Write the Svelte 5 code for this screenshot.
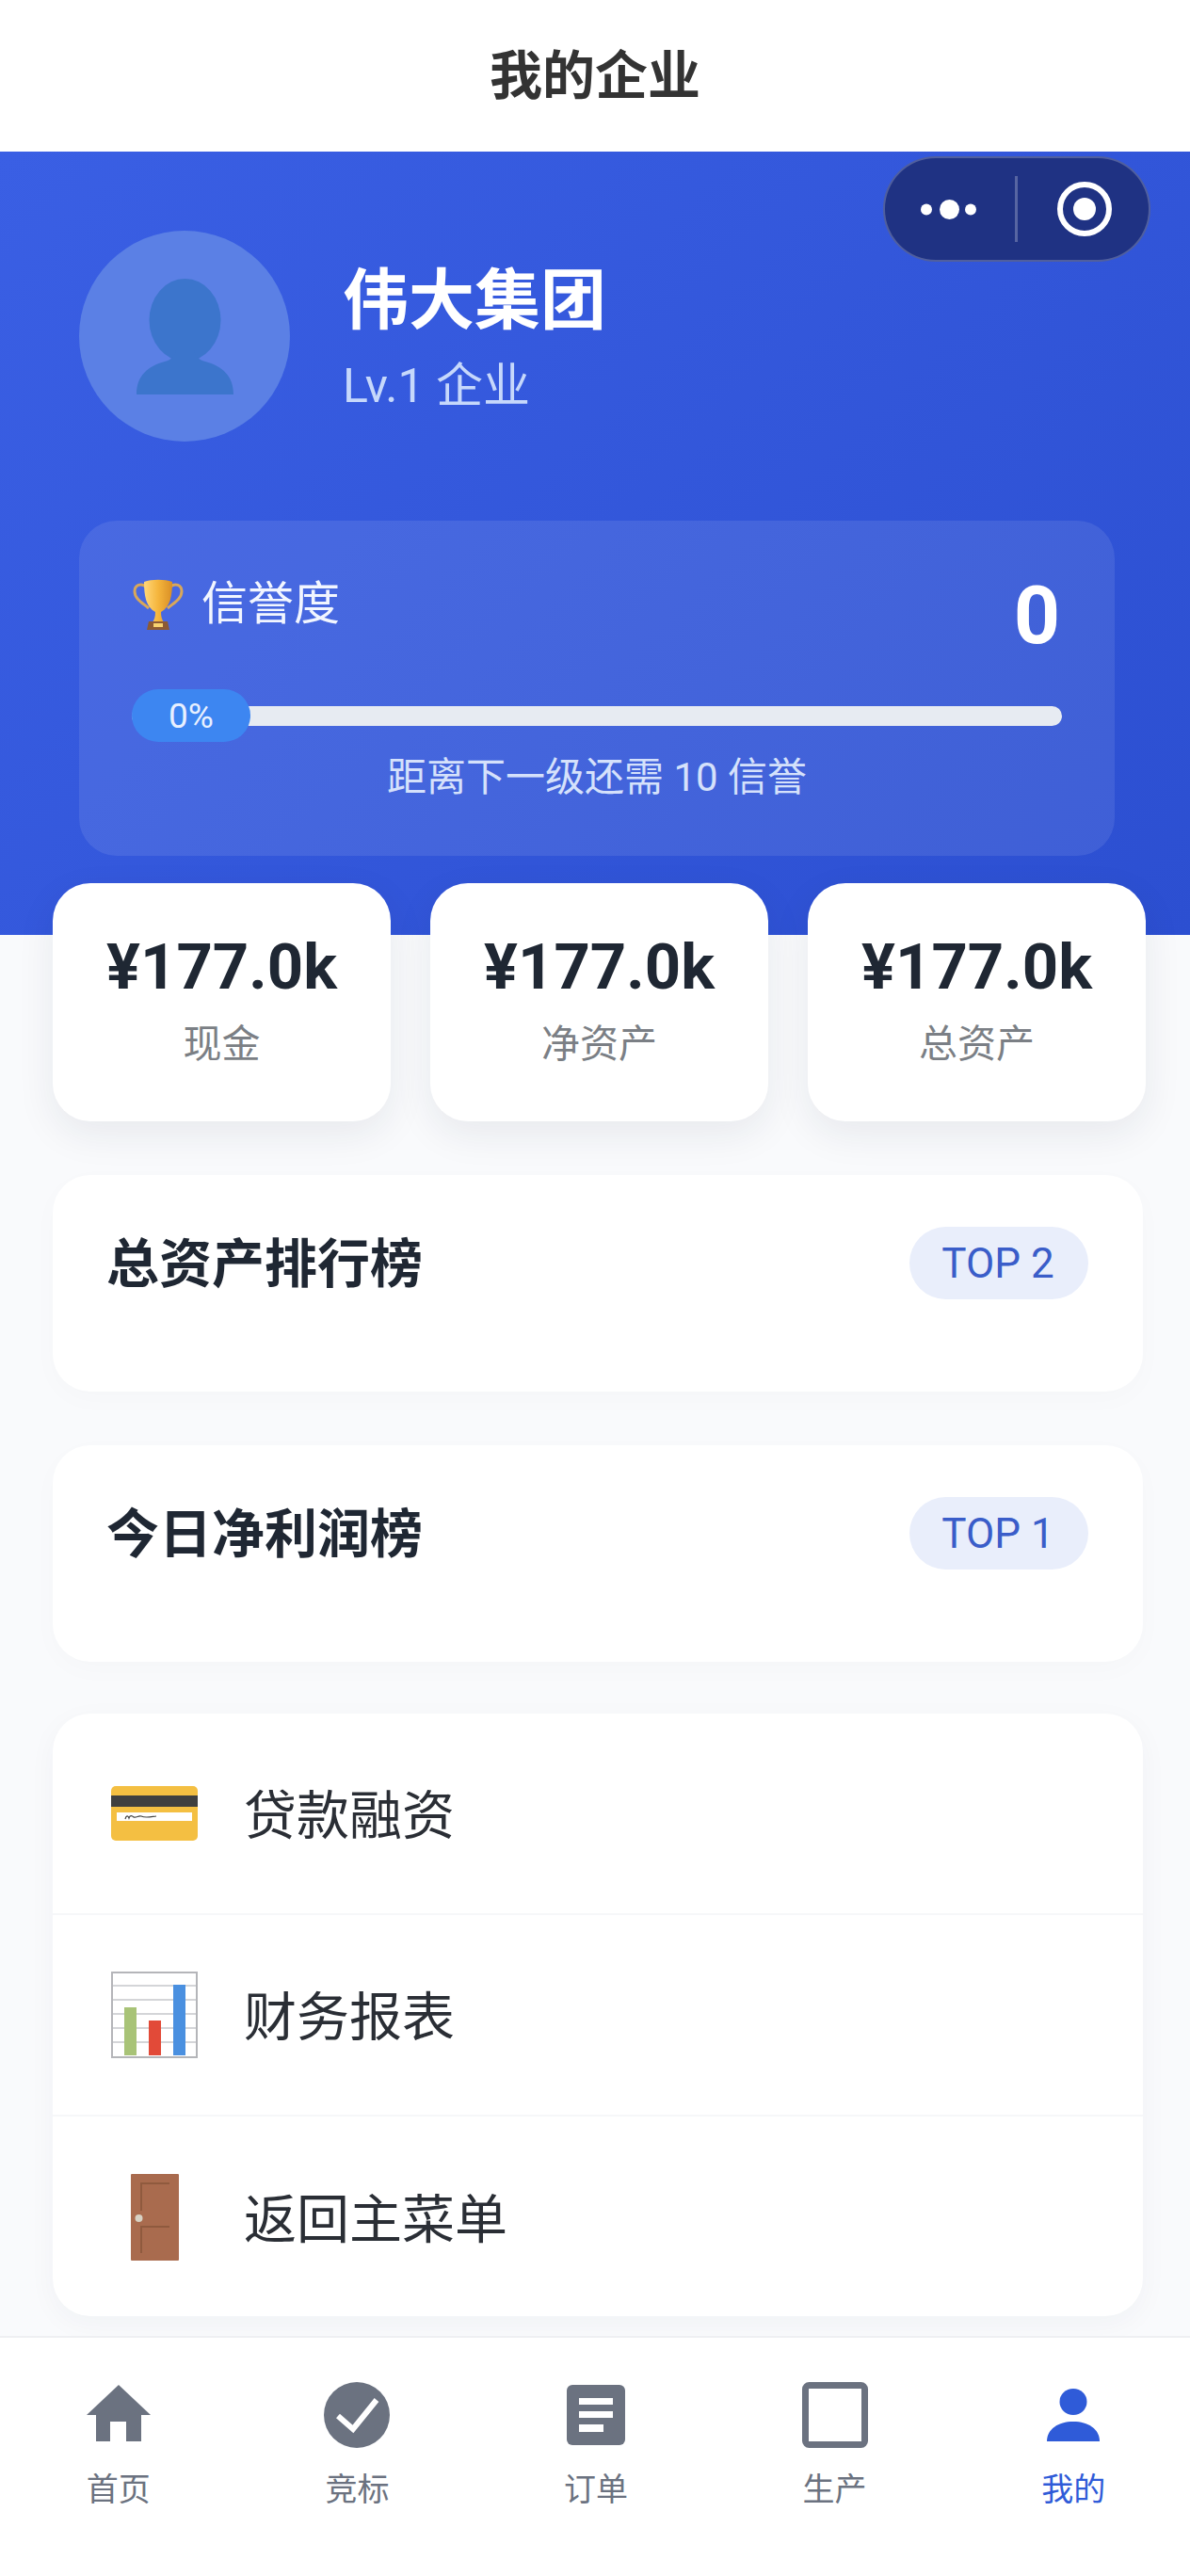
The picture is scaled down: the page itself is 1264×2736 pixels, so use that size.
<script>
  const stats = [
    { value: '¥177.0k', label: '现金' },
    { value: '¥177.0k', label: '净资产' },
    { value: '¥177.0k', label: '总资产' }
  ];
  const ranks = [
    { title: '总资产排行榜', top: 'TOP 2' },
    { title: '今日净利润榜', top: 'TOP 1' }
  ];
  const menu = [
    { icon: 'card', label: '贷款融资' },
    { icon: 'chart', label: '财务报表' },
    { icon: 'door', label: '返回主菜单' }
  ];
  const tabs = [
    { icon: 'home', label: '首页' },
    { icon: 'check', label: '竞标' },
    { icon: 'order', label: '订单' },
    { icon: 'square', label: '生产' },
    { icon: 'user', label: '我的', active: true }
  ];
</script>

<div class="page">
  <header class="nav">我的企业</header>

  <section class="hero">
    <div class="capsule">
      <svg class="dots" viewBox="0 0 59 21" width="59" height="21">
        <circle cx="6" cy="10.500" r="6" fill="#fff" />
        <circle cx="30.500" cy="10.500" r="10.500" fill="#fff" />
        <circle cx="53" cy="10.500" r="6" fill="#fff" />
      </svg>
      <span class="sep"></span>
      <svg class="target" viewBox="0 0 60 60" width="60" height="60">
        <circle cx="30" cy="30" r="26" fill="none" stroke="#fff" stroke-width="6" />
        <circle cx="30" cy="30" r="12" fill="#fff" />
      </svg>
    </div>

    <div class="profile">
      <div class="avatar">
        <svg viewBox="0 0 103 123" width="103" height="123">
          <ellipse cx="51.500" cy="44" rx="38" ry="44" fill="#3c75cc" />
          <path fill="#3c75cc" d="M0 123c0-20 12-30 30-35 7-2 11-6 12-12h19c1 6 5 10 12 12 18 5 30 15 30 35z" />
        </svg>
      </div>
      <div class="who">
        <div class="name">伟大集团</div>
        <div class="level">Lv.1 企业</div>
      </div>
    </div>

    <div class="credit">
      <div class="credit-head">
        <div class="credit-title">
          <svg viewBox="0 0 56 56" width="56" height="56">
            <defs>
              <linearGradient id="cup" x1="0" x2="1" y1="0" y2="0">
                <stop offset="0" stop-color="#ffd77a" />
                <stop offset="0.5" stop-color="#f5b53c" />
                <stop offset="1" stop-color="#d98f26" />
              </linearGradient>
            </defs>
            <path fill="none" stroke="#d8a75a" stroke-width="3" d="M15 9C10 5 3 7 3 14c0 8 8 12 15 18M41 9c5-4 12-2 12 5 0 8-8 12-15 18" />
            <path fill="url(#cup)" d="M13 4c8-3 22-3 30 0 0 14-2 27-12 32 0 5 1 8 3 11H22c2-3 3-6 3-11C15 31 13 18 13 4z" />
            <path fill="#8c5a34" d="M18 46h20l2 9H16z" />
            <path fill="#f7d270" d="M23 48h10v4H23z" />
          </svg>
          <span>信誉度</span>
        </div>
        <div class="credit-value">0</div>
      </div>
      <div class="progress">
        <div class="bar"></div>
        <div class="pill">0%</div>
      </div>
      <div class="credit-hint">距离下一级还需 10 信誉</div>
    </div>
  </section>

  <section class="stats">
    {#each stats as s}
      <div class="stat">
        <div class="stat-value">{s.value}</div>
        <div class="stat-label">{s.label}</div>
      </div>
    {/each}
  </section>

  {#each ranks as r}
    <section class="rank">
      <div class="rank-title">{r.title}</div>
      <div class="rank-top">{r.top}</div>
    </section>
  {/each}

  <section class="menu">
    {#each menu as m}
      <div class="menu-row">
        <span class="menu-icon">
          {#if m.icon === 'card'}
            <svg viewBox="0 0 92 58" width="92" height="58">
              <rect width="92" height="58" rx="5" fill="#f4bf42" />
              <rect y="10" width="92" height="12" fill="#3f3f3f" />
              <rect x="6" y="28" width="80" height="9" fill="#fff" />
              <path d="M15 35c1-4 3-4 4-1 1-3 3-3 5-1 3 1 5-2 8-1 4 2 8 1 16 0" fill="none" stroke="#444" stroke-width="1.2" />
            </svg>
          {:else if m.icon === 'chart'}
            <svg viewBox="0 0 92 92" width="92" height="92">
              <rect x="1" y="1" width="90" height="90" fill="#fff" stroke="#b4b5b9" stroke-width="2" />
              <path d="M2 15h88M2 30h88M2 45h88M2 60h88M2 75h88" stroke="#c6c7cb" stroke-width="1.4" />
              <rect x="14" y="38" width="13" height="51" fill="#a8c377" />
              <rect x="40" y="52" width="13" height="37" fill="#e24a38" />
              <rect x="66" y="14" width="13" height="75" fill="#4a90e0" />
            </svg>
          {:else}
            <svg viewBox="0 0 51 92" width="51" height="92">
              <rect width="51" height="92" rx="1" fill="#a96b4e" />
              <rect x="10" y="9" width="31" height="30" fill="#8f5a3e" />
              <rect x="12" y="11" width="29" height="28" fill="#a96b4e" />
              <rect x="10" y="55" width="31" height="29" fill="#8f5a3e" />
              <rect x="12" y="57" width="29" height="27" fill="#a96b4e" />
              <circle cx="8.500" cy="47" r="4" fill="#d8d2c4" />
            </svg>
          {/if}
        </span>
        <span class="menu-label">{m.label}</span>
      </div>
    {/each}
  </section>

  <nav class="tabbar">
    {#each tabs as t}
      <div class="tab" class:active={t.active}>
        <svg viewBox="0 0 72 72" width="72" height="72">
          {#if t.icon === 'home'}
            <path fill="currentColor" d="M36 3 2 35h10v28h15V42h17v21h16V35h10z" />
          {:else if t.icon === 'check'}
            <circle cx="36" cy="35" r="35" fill="currentColor" />
            <path fill="none" stroke="#fff" stroke-width="6" d="M16 36l16 14 25-31" />
          {:else if t.icon === 'order'}
            <rect x="5" y="3" width="62" height="64" rx="6" fill="currentColor" />
            <path fill="#fff" d="M18 17h36v7H18zM18 31h36v7H18zM18 45h26v8H18z" />
          {:else if t.icon === 'square'}
            <rect x="4.500" y="3.500" width="63" height="63" rx="4" fill="#fff" stroke="currentColor" stroke-width="7" />
          {:else}
            <ellipse cx="36" cy="21" rx="14.500" ry="14" fill="currentColor" />
            <path fill="currentColor" d="M8 63c0-13 12-21 28-21s28 8 28 21z" />
          {/if}
        </svg>
        <span>{t.label}</span>
      </div>
    {/each}
  </nav>
</div>

<style>
  :global(body) {
    margin: 0;
    background: #f9fafc;
  }
  .page {
    position: relative;
    height: 2736px;
    overflow: hidden;
    background: #f9fafc;
    font-family: Roboto, "Noto Sans CJK SC", sans-serif;
    color: #1f2733;
  }
  .nav {
    height: 161px;
    box-sizing: border-box;
    padding-bottom: 10px;
    display: flex;
    align-items: center;
    justify-content: center;
    background: #fff;
    font-size: 56px;
    font-weight: 700;
    color: #333;
  }
  .hero {
    position: relative;
    height: 832px;
    box-sizing: border-box;
    padding: 84px 80px 0 84px;
    background: linear-gradient(135deg, #3a5fe4 0%, #2c4fd1 100%);
  }
  .capsule {
    position: absolute;
    top: 5px;
    right: 42px;
    width: 284px;
    height: 112px;
    box-sizing: border-box;
    border: 2px solid rgba(255, 255, 255, 0.22);
    border-radius: 56px;
    background: #1f3283;
    display: flex;
    align-items: center;
    padding-left: 38px;
  }
  .sep {
    width: 3px;
    height: 70px;
    margin-left: 41px;
    background: rgba(255, 255, 255, 0.25);
  }
  .target {
    margin-left: 41px;
  }
  .profile {
    display: flex;
    align-items: center;
    gap: 56px;
  }
  .avatar {
    width: 224px;
    height: 224px;
    border-radius: 50%;
    background: #5b80e5;
    display: flex;
    align-items: center;
    justify-content: center;
    flex: none;
  }
  .who {
    margin-top: 0;
  }
  .name {
    font-size: 70px;
    line-height: 92px;
    font-weight: 700;
    color: #fff;
  }
  .level {
    margin-top: 14px;
    font-size: 50px;
    line-height: 60px;
    font-weight: 400;
    color: #c6d8fb;
  }
  .credit {
    margin-top: 84px;
    height: 356px;
    box-sizing: border-box;
    padding: 54px 56px 0;
    border-radius: 40px;
    background: rgba(255, 255, 255, 0.09);
  }
  .credit-head {
    display: flex;
    justify-content: space-between;
    align-items: flex-start;
  }
  .credit-title {
    display: flex;
    align-items: center;
    gap: 18px;
    margin-top: 5px;
    font-size: 49px;
    line-height: 60px;
    font-weight: 400;
    color: #f2f6ff;
  }
  .credit-value {
    padding-top: 2px;
    font-size: 86px;
    line-height: 90px;
    font-weight: 700;
    color: #fff;
    margin-right: 2px;
  }
  .progress {
    position: relative;
    display: flex;
    align-items: center;
    height: 56px;
    margin-top: 33px;
  }
  .bar {
    flex: 1;
    height: 21px;
    border-radius: 11px;
    background: #e7ebf2;
  }
  .pill {
    position: absolute;
    left: 0;
    top: 0;
    width: 126px;
    height: 56px;
    border-radius: 28px;
    background: #3d86f1;
    color: #e8f0ff;
    font-size: 37px;
    font-weight: 400;
    display: flex;
    align-items: center;
    justify-content: center;
  }
  .credit-hint {
    margin-top: 8px;
    text-align: center;
    font-size: 42px;
    line-height: 60px;
    font-weight: 400;
    color: #d5e1fb;
  }
  .stats {
    position: relative;
    display: flex;
    justify-content: space-between;
    margin: -55px 47px 0 56px;
  }
  .stat {
    width: 359px;
    height: 253px;
    border-radius: 40px;
    background: #fff;
    box-shadow: 0 14px 40px rgba(30, 40, 70, 0.08);
    text-align: center;
  }
  .stat-value {
    margin-top: 49px;
    padding-top: 0;
    font-size: 67px;
    line-height: 80px;
    font-weight: 700;
    color: #1f2733;
  }
  .stat-label {
    margin-top: 14px;
    font-size: 41px;
    line-height: 56px;
    font-weight: 400;
    color: #7b7f85;
  }
  .rank {
    height: 230px;
    box-sizing: border-box;
    margin: 57px 50px 0 56px;
    padding: 56px 58px 0 57px;
    border-radius: 40px;
    background: #fff;
    box-shadow: 0 8px 30px rgba(30, 40, 70, 0.02);
    display: flex;
    justify-content: space-between;
    align-items: flex-start;
  }
  .rank-title {
    font-size: 56px;
    line-height: 78px;
    font-weight: 700;
    color: #1f2733;
  }
  .rank-top {
    width: 190px;
    height: 77px;
    border-radius: 39px;
    background: #e9eefb;
    color: #3a5dc9;
    font-size: 44px;
    font-weight: 400;
    display: flex;
    align-items: center;
    justify-content: center;
    margin-top: -1px;
    padding-right: 2px;
    box-sizing: border-box;
  }
  .menu {
    margin: 55px 50px 0 56px;
    height: 640px;
    border-radius: 40px;
    background: #fff;
    box-shadow: 0 8px 30px rgba(30, 40, 70, 0.04);
    overflow: hidden;
  }
  .menu-row {
    height: 214px;
    display: flex;
    align-items: center;
    padding-left: 62px;
    border-bottom: 2px solid #f6f7f9;
    box-sizing: border-box;
  }
  .menu-row:last-child {
    border-bottom: 0;
  }
  .menu-icon {
    width: 92px;
    display: flex;
    justify-content: center;
    flex: none;
  }
  .menu-label {
    margin: -6px 0 0 49px;
    font-size: 56px;
    font-weight: 400;
    color: #2a2e35;
  }
  .tabbar {
    position: absolute;
    left: -1px;
    right: -3px;
    bottom: 0;
    height: 255px;
    box-sizing: border-box;
    padding-top: 47px;
    display: flex;
    background: #fff;
    border-top: 2px solid #eeeff2;
  }
  .tab {
    flex: 1;
    display: flex;
    flex-direction: column;
    align-items: center;
    color: #6b7280;
    font-size: 34px;
    font-weight: 400;
  }
  .tab span {
    margin-top: 19px;
    line-height: 46px;
  }
  .tab.active {
    color: #2f5bd8;
  }
</style>
